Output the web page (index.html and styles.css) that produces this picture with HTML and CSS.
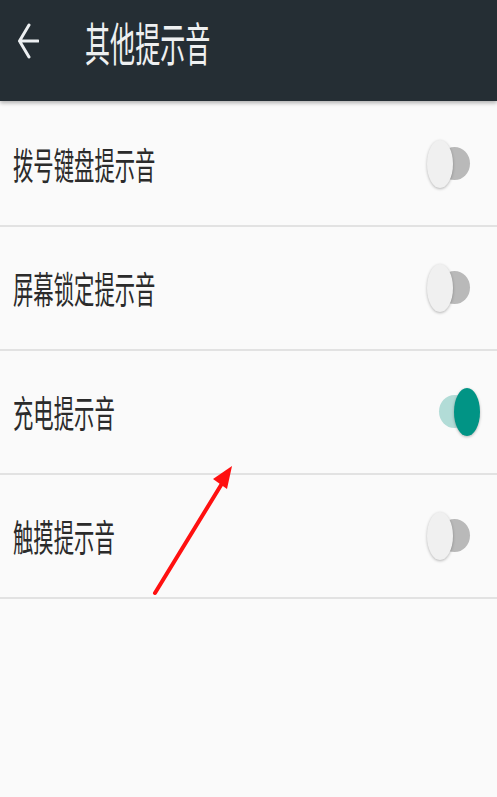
FILE: index.html
```html
<!DOCTYPE html>
<html lang="zh">
<head>
<meta charset="utf-8">
<title>其他提示音</title>
<link rel="stylesheet" href="styles.css">
</head>
<body>
<div class="page">
  <header class="appbar">
    <svg class="back" width="22" height="36" viewBox="0 0 22 36" aria-hidden="true">
      <path d="M12 2 L2.5 18 L12 34 M2.5 18 H21" fill="none" stroke="#eceff1" stroke-width="3" stroke-linecap="round" stroke-linejoin="round"/>
    </svg>
    <span class="title">其他提示音</span>
  </header>
  <ul class="list">
    <li class="row"><span class="label">拨号键盘提示音</span><span class="switch"><span class="track"></span><span class="thumb"></span></span></li>
    <li class="row"><span class="label">屏幕锁定提示音</span><span class="switch"><span class="track"></span><span class="thumb"></span></span></li>
    <li class="row"><span class="label">充电提示音</span><span class="switch on"><span class="track"></span><span class="thumb"></span></span></li>
    <li class="row"><span class="label">触摸提示音</span><span class="switch"><span class="track"></span><span class="thumb"></span></span></li>
  </ul>
  <svg class="annotation" width="497" height="797" viewBox="0 0 497 797" aria-hidden="true">
    <line x1="155" y1="593" x2="226" y2="477" stroke="#ff1010" stroke-width="4" stroke-linecap="round"/>
    <polygon points="232,466 213,479 227,489" fill="#ff1010"/>
  </svg>
</div>
</body>
</html>
```
FILE: styles.css
```css
html, body {
  margin: 0;
  padding: 0;
  background: #fafafa;
}
.page {
  position: relative;
  width: 497px;
  height: 797px;
  overflow: hidden;
  font-family: "Noto Sans CJK SC", "Noto Sans", sans-serif;
}
.appbar {
  height: 82px;
  padding-bottom: 19px;
  background: #252e34;
  display: flex;
  align-items: center;
  box-shadow: 0 2px 4px rgba(0, 0, 0, 0.3);
  position: relative;
  z-index: 1;
}
.back {
  margin-left: 17px;
  flex: none;
}
.title {
  margin-left: 46px;
  color: #eef0f1;
  font-size: 46px;
  line-height: 1;
  white-space: nowrap;
  transform: scaleX(0.545);
  transform-origin: left center;
}
.list {
  list-style: none;
  margin: 0;
  padding: 2px 0 0;
}
.row {
  height: 122px;
  border-bottom: 2px solid #e2e2e2;
  display: flex;
  align-items: center;
  justify-content: space-between;
  padding: 0 17px 0 13px;
}
.label {
  color: #2b2b2b;
  font-size: 37px;
  line-height: 1;
  white-space: nowrap;
  transform: scaleX(0.55);
  transform-origin: left center;
}
.switch {
  position: relative;
  width: 53px;
  height: 50px;
  flex: none;
}
.track {
  position: absolute;
  left: 12px;
  top: 8px;
  width: 31px;
  height: 33px;
  border-radius: 50%;
  background: #b9b9b9;
}
.thumb {
  position: absolute;
  left: 0;
  top: 1px;
  width: 26px;
  height: 48px;
  border-radius: 50%;
  background: #f0f0f0;
  box-shadow: 0 1px 3px rgba(0, 0, 0, 0.28);
}
.switch.on .track {
  background: #b2dcd7;
}
.switch.on .thumb {
  left: 27px;
  background: #019485;
}
.annotation {
  position: absolute;
  left: 0;
  top: 0;
  pointer-events: none;
  z-index: 2;
}
```
